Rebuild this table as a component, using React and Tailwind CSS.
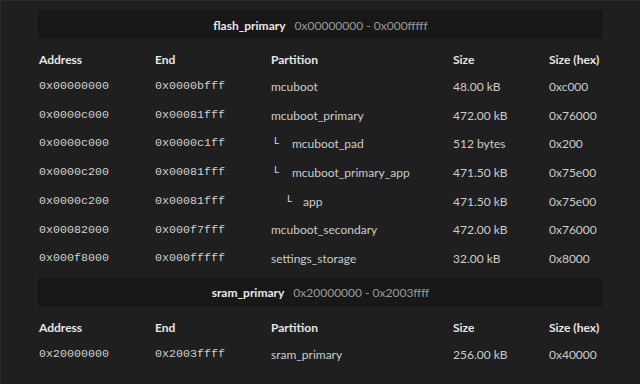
const sections = [
  {
    name: 'flash_primary',
    range: '0x00000000 - 0x000fffff',
    rows: [
      { addr: '0x00000000', end: '0x0000bfff', name: 'mcuboot', depth: 0, size: '48.00 kB', hex: '0xc000' },
      { addr: '0x0000c000', end: '0x00081fff', name: 'mcuboot_primary', depth: 0, size: '472.00 kB', hex: '0x76000' },
      { addr: '0x0000c000', end: '0x0000c1ff', name: 'mcuboot_pad', depth: 1, size: '512 bytes', hex: '0x200' },
      { addr: '0x0000c200', end: '0x00081fff', name: 'mcuboot_primary_app', depth: 1, size: '471.50 kB', hex: '0x75e00' },
      { addr: '0x0000c200', end: '0x00081fff', name: 'app', depth: 2, size: '471.50 kB', hex: '0x75e00' },
      { addr: '0x00082000', end: '0x000f7fff', name: 'mcuboot_secondary', depth: 0, size: '472.00 kB', hex: '0x76000' },
      { addr: '0x000f8000', end: '0x000fffff', name: 'settings_storage', depth: 0, size: '32.00 kB', hex: '0x8000' },
    ],
  },
  {
    name: 'sram_primary',
    range: '0x20000000 - 0x2003ffff',
    rows: [
      { addr: '0x20000000', end: '0x2003ffff', name: 'sram_primary', depth: 0, size: '256.00 kB', hex: '0x40000' },
    ],
  },
];

const cols = 'grid grid-cols-[116px_116px_182px_96px_1fr] items-center pl-[1px] whitespace-nowrap';
const mono = { fontFamily: '"Liberation Mono", "Courier New", monospace' };

function PartitionName({ name, depth }) {
  if (depth === 0) return <span>{name}</span>;
  return (
    <span className="flex items-center">
      <span className={depth === 2 ? 'w-[32px] pl-[16px]' : 'w-[21px] pl-[3px]'}>
        <span className="relative top-[-4px] text-[10px] text-[#dcdcdc]">L</span>
      </span>
      <span>{name}</span>
    </span>
  );
}

function Section({ section, first }) {
  return (
    <div className={first ? '' : 'mt-[4.5px]'}>
      <div className="h-[29px] bg-[#181818] flex items-center justify-center gap-[9px] pt-[2px]">
        <span className="font-bold text-[#e8e8e8]">{section.name}</span>
        <span className="text-[#9a9a9a]">{section.range}</span>
      </div>
      <div className={`${cols} h-[25.3px] mt-[8.3px] font-bold text-[#e6e6e6]`}>
        <span>Address</span>
        <span>End</span>
        <span>Partition</span>
        <span>Size</span>
        <span>Size (hex)</span>
      </div>
      {section.rows.map((r, i) => (
        <div key={i} className={`${cols} h-[28.7px] text-[#cccccc]`}>
          <span className="text-[11.7px] text-[#cfcfcf]" style={mono}>{r.addr}</span>
          <span className="text-[11.7px] text-[#cfcfcf]" style={mono}>{r.end}</span>
          <PartitionName name={r.name} depth={r.depth} />
          <span>{r.size}</span>
          <span>{r.hex}</span>
        </div>
      ))}
    </div>
  );
}

export default function App() {
  return (
    <div
      className="w-[640px] h-[384px] overflow-hidden bg-[#1f1f1f] border-t border-l border-[#2b2b2b] pl-[37px] pr-[37px] pt-[9px] text-[12px] leading-none"
      style={{ fontFamily: 'Lato, "Liberation Sans", sans-serif' }}
    >
      {sections.map((s, i) => (
        <Section key={s.name} section={s} first={i === 0} />
      ))}
    </div>
  );
}
